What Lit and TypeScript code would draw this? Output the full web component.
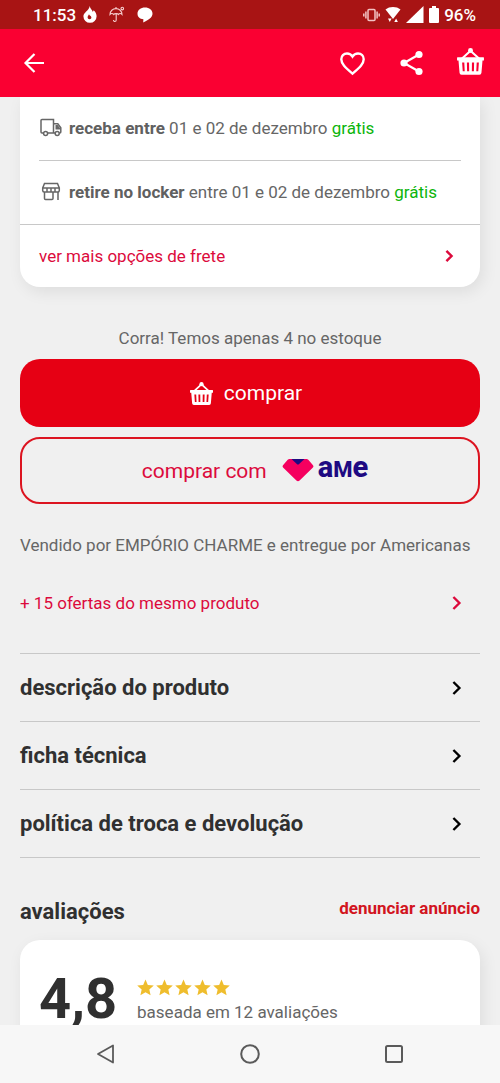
import { LitElement, html, css, svg } from "lit";
import { customElement, property } from "lit/decorators.js";

const basket = (cls: string, viewBox = "0 0 26 26") => html`
  <svg class=${cls} viewBox=${viewBox} aria-hidden="true">
    <path d="M4 10.800 L12 3.600 M22 10.800 L14 3.600" fill="none" stroke="currentColor" stroke-width="2" />
    <circle cx="13" cy="2.500" r="2.400" fill="currentColor" />
    <path
      fill="currentColor"
      fill-rule="evenodd"
      d="M0.5 9h25a.5.5 0 0 1 .5.5v2.600h-1.400l-1 11.900a2 2 0 0 1-2 1.900H4.400a2 2 0 0 1-2-1.900l-1-11.900H0v-2.600a.5.5 0 0 1 .5-.5z
      M4.900 14l.6 8.500h1.900l-.4-8.500z M9.500 14l.2 8.500h2l-.1-8.500z M14.400 14l-.1 8.500h2l.2-8.500z M19 14l-.4 8.500h1.900l.6-8.500z"
    />
  </svg>
`;

const star = html`
  <svg class="star" viewBox="0 0 16 16" aria-hidden="true">
    <path d="M8 .4l2.2 5.2 5.6.5-4.2 3.7 1.2 5.5L8 12.4l-4.8 2.9 1.2-5.5L.2 6.1l5.6-.5z" fill="#efbd2d" />
  </svg>
`;

@customElement("chevron-icon")
class ChevronIcon extends LitElement {
  static styles = css`
    :host {
      display: block;
      flex: none;
      line-height: 0;
    }
    .chevron {
      width: 10px;
      height: 14px;
      fill: none;
      stroke: currentColor;
      stroke-width: 2.4;
    }
    :host([small]) .chevron {
      width: 9px;
      height: 12px;
      stroke-width: 2.8;
    }
  `;

  render() {
    return html`
      <svg class="chevron" viewBox="0 0 10 14" aria-hidden="true">${svg`<path d="M1.4 1l6 6-6 6" />`}</svg>
    `;
  }
}

@customElement("device-status")
class DeviceStatus extends LitElement {
  static styles = css`
    :host {
      display: block;
    }
    .status {
      display: flex;
      align-items: center;
      justify-content: space-between;
      height: 29px;
      padding: 0 24px 0 33px;
      background: #a81414;
      color: #fff;
      font-size: 17px;
      line-height: 20px;
      font-weight: 500;
    }
    .group {
      display: flex;
      align-items: center;
    }
    .left {
      gap: 7px;
    }
    .right {
      gap: 5px;
    }
    .notices {
      display: flex;
      align-items: center;
      gap: 12px;
    }
    svg {
      display: block;
    }
  `;

  render() {
    return html`
      <div class="status">
        <div class="group left">
          <span>11:53</span>
          <div class="notices">
            <svg width="14" height="17" viewBox="0 0 14 17">
              <path
                d="M6.800 0c.4 3.200 2.400 3.400 2.800 5.800.5-.3.900-.8 1-1.600 1.900 1.700 3 3.800 3 6.100A6.500 6.500 0 0 1 7 16.800 6.500 6.500 0 0 1 .4 10.300C.4 6.500 5.700 5 6.800 0z"
                fill="#fff"
              />
              <path d="M6 8.200c.4 1.500 2.400 1.700 2.400 3.400 0 1-.8 1.700-1.800 1.700-1.200 0-2-.8-2-2 0-1.200 1-1.900 1.400-3.100z" fill="#a81414" />
            </svg>
            <svg width="16" height="17" viewBox="0 0 16 17" fill="none" stroke="#f6cfcf" stroke-width="1.100">
              <path d="M1 8.500C1 5 3.800 2.600 7 2.600S13 5 13 8.500c-1-1.300-2.700-1.300-3.500 0C8.800 7.300 5.500 7.300 4.700 8.500 3.800 7.200 2 7.200 1 8.500z" />
              <path d="M7 1v1.600M7.200 8v6c0 2-2.700 2-2.700 0" />
              <circle cx="13.300" cy="2.600" r="1.300" />
            </svg>
            <svg width="16" height="16" viewBox="0 0 16 16">
              <path d="M8 .5c4.300 0 7.500 2.400 7.500 6.200 0 3.600-3.800 6-9.300 8.800l.2-3.300C2.700 12 .5 9.800.5 6.700.500 2.900 3.700.5 8 .5z" fill="#fff" />
            </svg>
          </div>
        </div>
        <div class="group right">
          <svg width="17" height="14" viewBox="0 0 17 14" fill="none" stroke="#f3c4c4" stroke-width="1.500">
            <rect x="5" y="1.500" width="7" height="11" rx="1" />
            <path d="M2.900 3.500v7M.8 5.500v3M14.100 3.500v7M16.200 5.500v3" />
          </svg>
          <svg width="16" height="17" viewBox="0 0 16 17" fill="#fff">
            <path d="M.5 3.500C4.500.2 11.500.2 15.500 3.500L8 13z" />
            <path d="M3 12.500h3.600L4.800 16zM9.300 16l1.800-3.500 1.800 3.500z" />
          </svg>
          <svg width="18" height="17" viewBox="0 0 18 17"><path d="M17.500 0v17H0z" fill="#fff" /></svg>
          <svg width="10" height="17" viewBox="0 0 10 17">
            <path d="M3 0h4v2h2a1 1 0 0 1 1 1v13a1 1 0 0 1-1 1H1a1 1 0 0 1-1-1V3a1 1 0 0 1 1-1h2z" fill="#fff" />
          </svg>
          <span>96%</span>
        </div>
      </div>
    `;
  }
}

@customElement("info-row")
class InfoRow extends LitElement {
  @property() label = "";

  static styles = css`
    :host {
      display: block;
      border-top: 1px solid #c8c8c8;
    }
    .row {
      display: flex;
      align-items: center;
      justify-content: space-between;
      width: 100%;
      height: 67px;
      padding: 0 18px 0 0;
      border: 0;
      background: none;
      font: inherit;
      font-size: 22px;
      line-height: 28px;
      font-weight: 700;
      color: #303030;
      text-align: left;
    }
    .mark {
      color: #000;
    }
  `;

  render() {
    return html`
      <button class="row" type="button">
        <span>${this.label}</span>
        <chevron-icon class="mark"></chevron-icon>
      </button>
    `;
  }
}

@customElement("app-root")
class AppRoot extends LitElement {
  static styles = css`
    :host {
      display: grid;
      grid-template-rows: auto auto minmax(0, 1fr) auto;
      height: 100vh;
      background: #f0f0f0;
      color: #666;
      font-family: Roboto, "Liberation Sans", sans-serif;
      font-size: 17px;
      line-height: 24px;
    }
    * {
      box-sizing: border-box;
    }
    svg {
      display: block;
      flex: none;
    }
    button {
      font: inherit;
      cursor: pointer;
    }
    a {
      text-decoration: none;
    }
    p,
    h2 {
      margin: 0;
    }
    .appbar {
      display: flex;
      align-items: center;
      justify-content: space-between;
      height: 68px;
      padding: 0 16px 0 21px;
      background: #fa0032;
      color: #fff;
    }
    .actions {
      display: flex;
      align-items: center;
      gap: 32px;
    }
    .tool {
      display: block;
      padding: 0;
      border: 0;
      background: none;
      color: inherit;
    }
    .basket-large {
      width: 27px;
      height: 30px;
    }
    .basket {
      width: 23px;
      height: 23px;
    }
    .content {
      overflow: hidden;
      padding: 0 20px;
    }
    .card {
      background: #fff;
      box-shadow: 3px 5px 16px rgba(0, 0, 0, 0.08);
    }
    .shipping {
      border-radius: 0 0 20px 20px;
    }
    .option {
      display: flex;
      align-items: center;
      gap: 7px;
      height: 63px;
      margin: 0 19px;
      padding-bottom: 2px;
    }
    .option + .option {
      height: 64px;
      border-top: 1px solid #c8c8c8;
    }
    .option b {
      font-weight: 700;
      color: #606060;
    }
    .free {
      color: #0cb50c;
    }
    .link {
      display: flex;
      align-items: center;
      justify-content: space-between;
      color: #dc0a3c;
    }
    .more {
      height: 63px;
      padding: 0 26px 0 19px;
      border-top: 1px solid #c8c8c8;
    }
    .stock {
      margin-top: 39px;
      text-align: center;
    }
    .buy {
      display: flex;
      align-items: center;
      justify-content: center;
      width: 100%;
      border-radius: 20px;
      font-size: 21px;
      line-height: 28px;
    }
    .primary {
      gap: 11px;
      height: 68px;
      margin-top: 9px;
      padding: 0 16px 0 8px;
      border: 0;
      background: #e60014;
      color: #fff;
    }
    .secondary {
      gap: 15px;
      height: 67px;
      margin-top: 10px;
      padding: 0 8px 0 18px;
      border: 2px solid #dc1420;
      background: none;
      color: #dc0a3c;
    }
    .ame {
      display: flex;
      align-items: center;
      gap: 4px;
      padding-bottom: 2px;
    }
    .wordmark {
      color: #1e0a82;
      font-size: 29px;
      font-weight: 800;
      line-height: 24px;
      padding-bottom: 2px;
    }
    .middle {
      font-size: 22px;
      text-transform: uppercase;
    }
    .seller {
      margin-top: 29px;
    }
    .offers {
      margin: 34px 0 38px;
      padding-right: 18px;
    }
    .rows {
      border-bottom: 1px solid #c8c8c8;
    }
    .heading {
      display: flex;
      align-items: flex-start;
      justify-content: space-between;
      margin: 40px 0 14px;
    }
    .title {
      font-size: 22px;
      line-height: 28px;
      font-weight: 700;
      color: #303030;
    }
    .report {
      color: #d2141e;
      line-height: 20px;
      font-weight: 700;
    }
    .rating {
      display: flex;
      align-items: flex-start;
      gap: 20px;
      padding: 27px 19px;
      border-radius: 20px;
    }
    .score {
      font-size: 56px;
      line-height: 64px;
      font-weight: 700;
      color: #303030;
    }
    .summary {
      display: grid;
      gap: 4px;
      padding-top: 12px;
    }
    .stars {
      display: flex;
      gap: 2px;
    }
    .star {
      width: 17px;
      height: 17px;
    }
    .nav {
      display: flex;
      align-items: center;
      justify-content: space-between;
      height: 58px;
      padding: 0 96px;
      background: #f7f7f7;
      color: #5a5a5a;
    }
  `;

  render() {
    return html`
      <device-status></device-status>
      <header class="appbar">
        <button class="tool" type="button" aria-label="voltar">
          <svg width="26" height="22" viewBox="0 0 26 22" fill="none" stroke="currentColor" stroke-width="2.200">
            <path d="M23 11H4.500M13.500 2l-9 9 9 9" />
          </svg>
        </button>
        <div class="actions">
          <button class="tool" type="button" aria-label="favoritar">
            <svg width="27" height="25" viewBox="0 0 27 25" fill="none" stroke="currentColor" stroke-width="2.400">
              <path
                d="M13.500 22.600C6 16.200 2.300 12.700 2.300 8.300c0-3.300 2.400-5.800 5.700-5.800 2.200 0 4.200 1.100 5.500 3 1.300-1.900 3.300-3 5.500-3 3.300 0 5.700 2.500 5.700 5.800 0 4.400-3.700 7.900-11.200 14.300z"
              />
            </svg>
          </button>
          <button class="tool" type="button" aria-label="compartilhar">
            <svg width="27" height="26" viewBox="0 0 27 26" fill="currentColor">
              <path d="M21 4.500L6 13l15 8.500" fill="none" stroke="currentColor" stroke-width="2.200" />
              <circle cx="21" cy="4.500" r="3.600" />
              <circle cx="6" cy="13" r="3.600" />
              <circle cx="21" cy="21.500" r="3.600" />
            </svg>
          </button>
          <button class="tool" type="button" aria-label="cesta">${basket("basket-large", "0 0 26 29")}</button>
        </div>
      </header>

      <main class="content">
        <section class="card shipping">
          <div class="option">
            <svg width="23" height="19" viewBox="0 0 23 19" fill="none" stroke="#666" stroke-width="1.500">
              <path d="M4.500 15H3a1 1 0 0 1-1-1V2.500a1 1 0 0 1 1-1h11.500V15H8.800M14.500 5.800h4.300l3 4V14a1 1 0 0 1-1 1h-.5M16 15h-1.500" />
              <path d="M16.500 7h2.200l2.600 3.500v1h-4.800z" fill="#666" stroke="none" />
              <circle cx="6.600" cy="15.500" r="2" />
              <circle cx="18.200" cy="15.500" r="2" />
            </svg>
            <span><b>receba entre</b> 01 e 02 de dezembro <span class="free">grátis</span></span>
          </div>
          <div class="option">
            <svg width="23" height="19" viewBox="0 0 23 19" fill="none" stroke="#666" stroke-width="1.500">
              <path d="M5.500 1.500h13l1.800 4.500v2.500a1.500 1.500 0 0 1-1.500 1.500H5.200a1.500 1.500 0 0 1-1.500-1.500V6zM3.700 6h16.600M8 6v4M12 6v4M16 6v4" />
              <path d="M5.500 10v6.500a1 1 0 0 0 1 1h6.500a1 1 0 0 0 1-1V10M19 10v8" />
            </svg>
            <span><b>retire no locker</b> entre 01 e 02 de dezembro <span class="free">grátis</span></span>
          </div>
          <a class="link more" href="#frete">
            <span>ver mais opções de frete</span>
            <chevron-icon small></chevron-icon>
          </a>
        </section>

        <p class="stock">Corra! Temos apenas 4 no estoque</p>
        <button class="buy primary" type="button">${basket("basket")}<span>comprar</span></button>
        <button class="buy secondary" type="button">
          <span>comprar com</span>
          <span class="ame">
            <svg width="32" height="24" viewBox="0 0 32 24" aria-hidden="true">
              <path
                d="M7.500 1h17a2.500 2.500 0 0 1 1.800.8l4.500 5.100a2 2 0 0 1-.1 2.800L17.600 22.500a2.300 2.300 0 0 1-3.200 0L1.300 9.700a2 2 0 0 1-.1-2.800l4.500-5.100A2.500 2.500 0 0 1 7.500 1z"
                fill="#f5005f"
              />
              <path d="M9.500 1h13l-5.400 5a1.700 1.700 0 0 1-2.300 0z" fill="#1e0a82" />
            </svg>
            <span class="wordmark">a<span class="middle">m</span>e</span>
          </span>
        </button>

        <p class="seller">Vendido por EMPÓRIO CHARME e entregue por Americanas</p>
        <a class="link offers" href="#ofertas">
          <span>+ 15 ofertas do mesmo produto</span>
          <chevron-icon></chevron-icon>
        </a>

        <div class="rows">
          <info-row label="descrição do produto"></info-row>
          <info-row label="ficha técnica"></info-row>
          <info-row label="política de troca e devolução"></info-row>
        </div>

        <div class="heading">
          <h2 class="title">avaliações</h2>
          <a class="report" href="#denunciar">denunciar anúncio</a>
        </div>
        <section class="card rating">
          <div class="score">4,8</div>
          <div class="summary">
            <div class="stars">${[1, 2, 3, 4, 5].map(() => star)}</div>
            <p>baseada em 12 avaliações</p>
          </div>
        </section>
      </main>

      <nav class="nav">
        <button class="tool" type="button" aria-label="voltar">
          <svg width="20" height="20" viewBox="0 0 20 20" fill="none" stroke="currentColor" stroke-width="1.800" stroke-linejoin="round">
            <path d="M17 1.500v17L2 10z" />
          </svg>
        </button>
        <button class="tool" type="button" aria-label="início">
          <svg width="20" height="20" viewBox="0 0 20 20" fill="none" stroke="currentColor" stroke-width="2">
            <circle cx="10" cy="10" r="8.800" />
          </svg>
        </button>
        <button class="tool" type="button" aria-label="recentes">
          <svg width="20" height="20" viewBox="0 0 20 20" fill="none" stroke="currentColor" stroke-width="2">
            <rect x="2" y="2" width="16" height="16" rx="1.500" />
          </svg>
        </button>
      </nav>
    `;
  }
}
